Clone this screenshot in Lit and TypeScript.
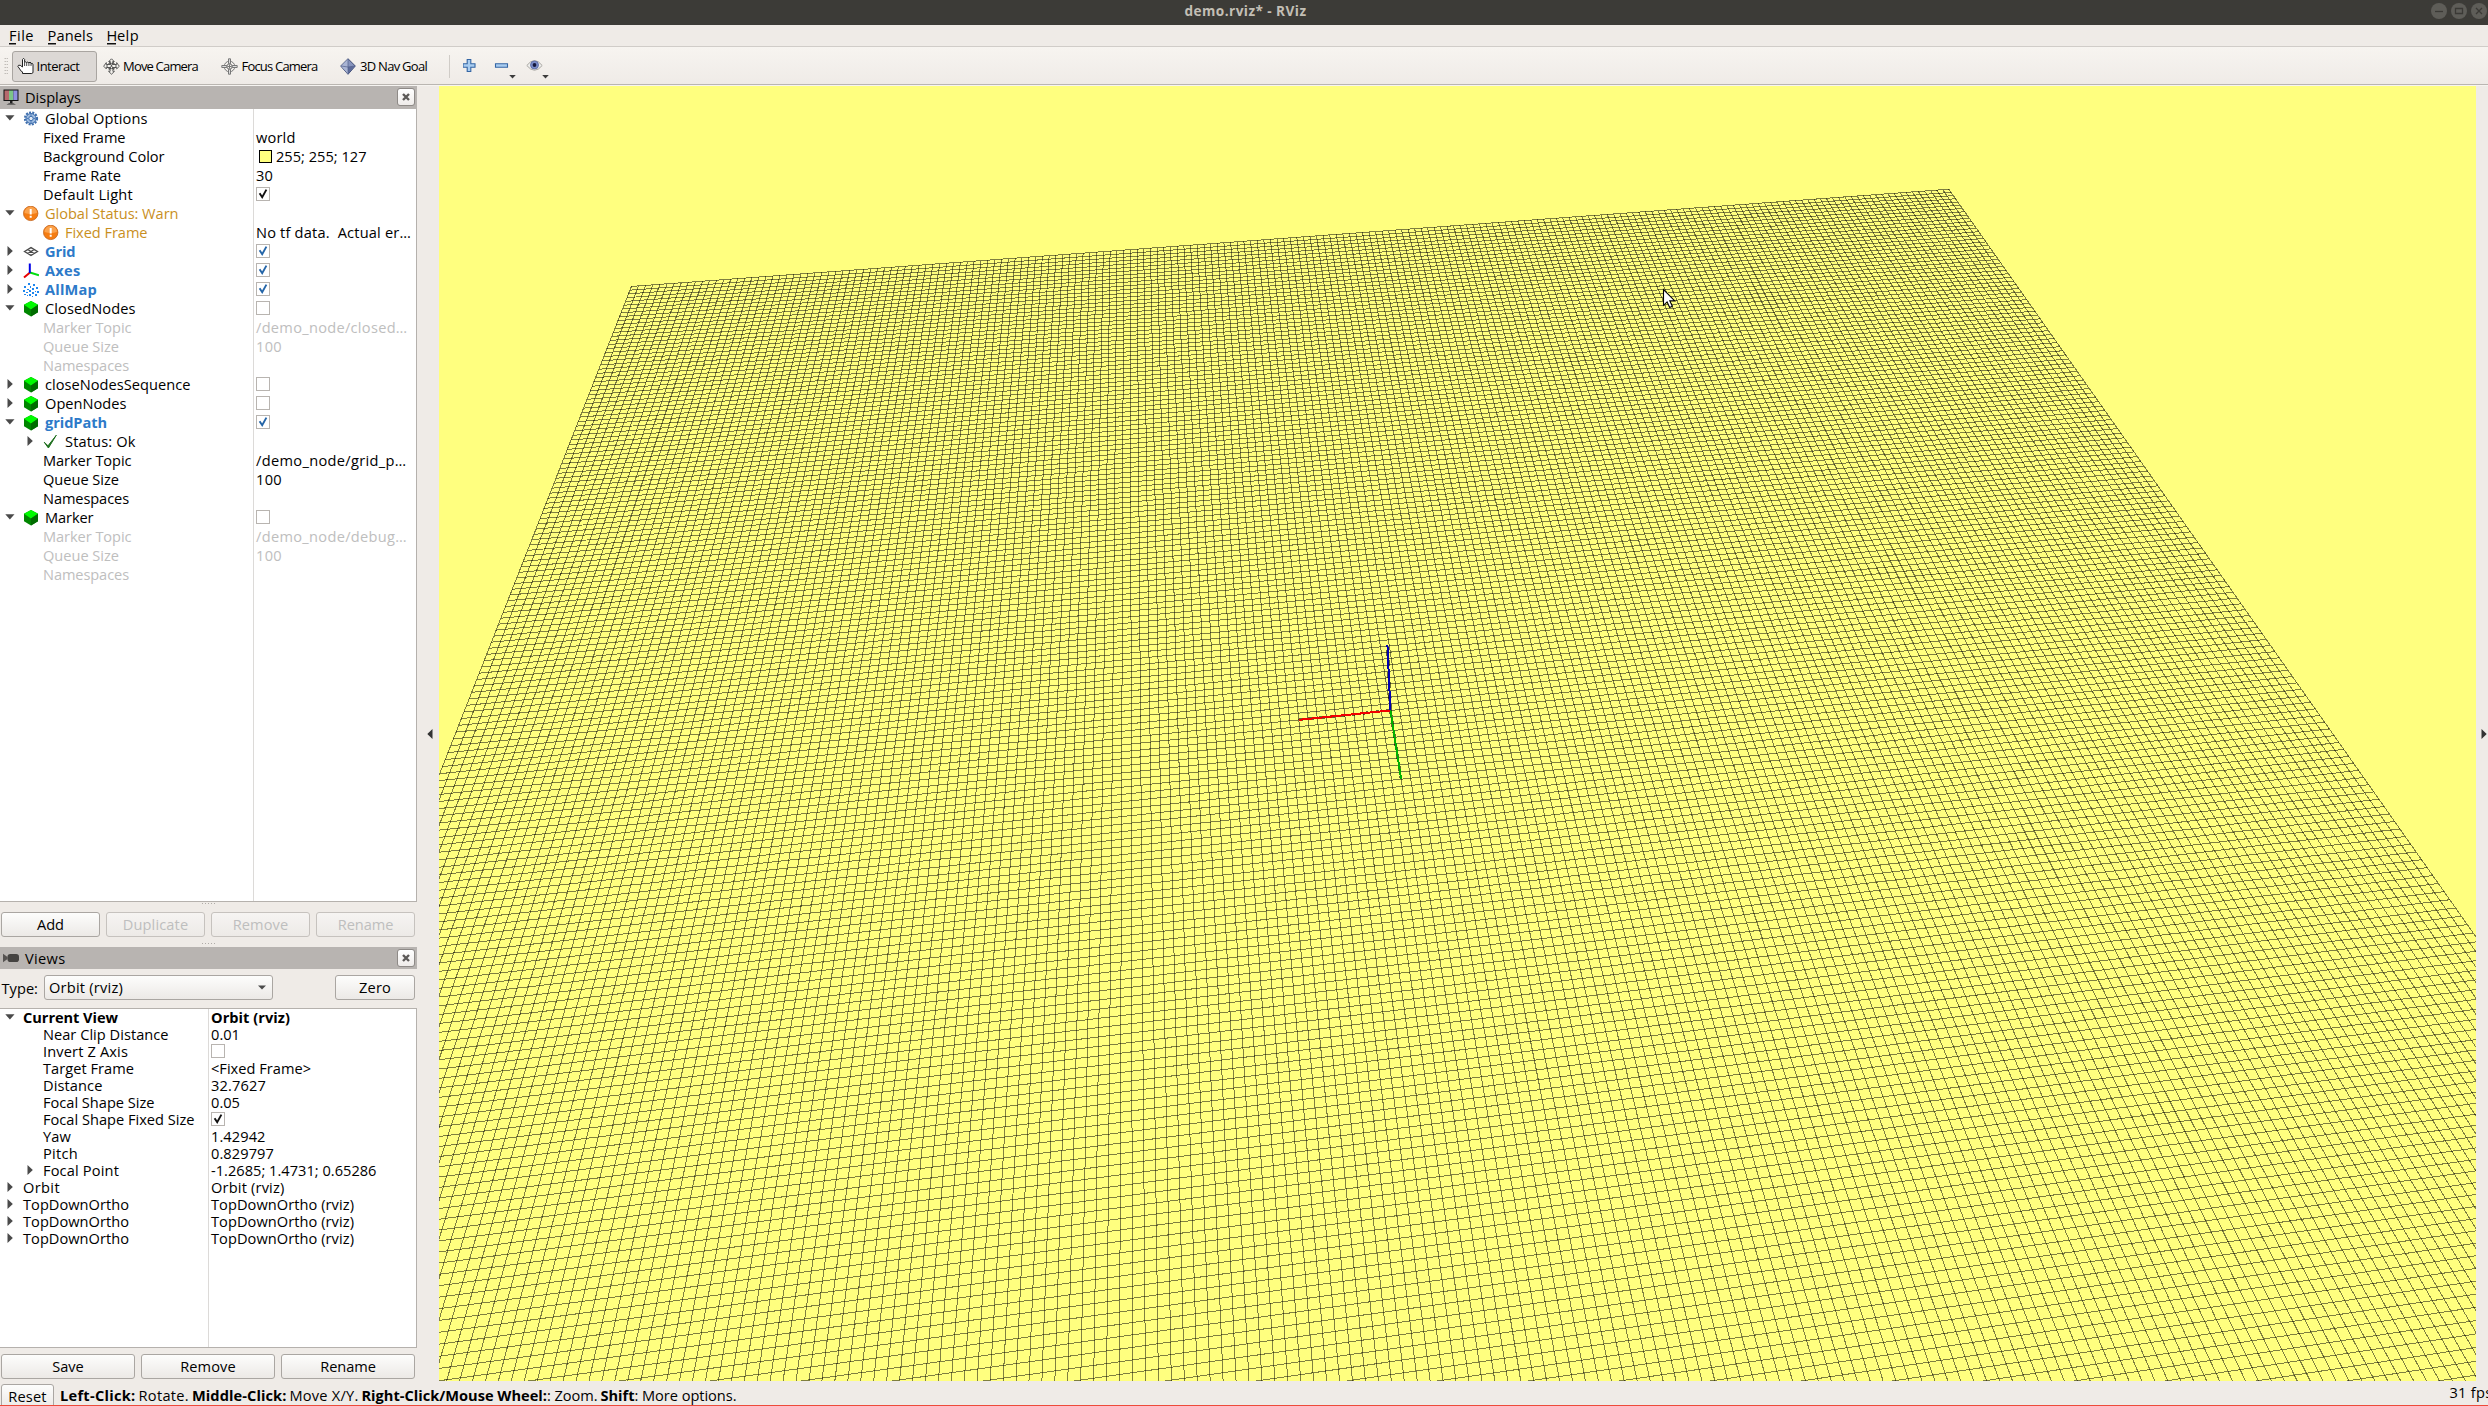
import { LitElement, html, css, svg, nothing } from "lit";
import { customElement, property, query } from "lit/decorators.js";

/* A single-line label whose tracking is adjusted so that it occupies a given width. */
@customElement("ui-text")
class UiText extends LitElement {
  @property() text = "";
  @property({ type: Number }) w = 0;
  @query("span") private span!: HTMLSpanElement;

  static styles = css`
    :host { display: inline-block; white-space: pre; flex: none; }
    span { display: inline-block; }
  `;

  updated() {
    if (!this.w) return;
    this.span.style.letterSpacing = "0px";
    const natural = this.span.getBoundingClientRect().width;
    this.span.style.letterSpacing = `${((this.w - natural) / this.text.length).toFixed(3)}px`;
  }

  render() {
    return html`<span>${this.text}</span>`;
  }
}

const t = (text: string, w: number, cls = "") => html`<ui-text class=${cls} .text=${text} .w=${w}></ui-text>`;

/* ---------- icons ---------- */
const icons: Record<string, unknown> = {
  gear: svg`<circle cx="8" cy="7.5" r="6" fill="none" stroke="#3f6fae" stroke-width="2.2" stroke-dasharray="2 1.2"/>
    <circle cx="8" cy="7.5" r="5" fill="#9dbbe0" stroke="#3f6fae" stroke-width="1"/>
    <circle cx="8" cy="7.5" r="2.2" fill="#dfe9f5" stroke="#3f6fae" stroke-width="1"/>
    <path d="M8 3v2.2M8 9.8V12M3.5 7.5h2.2M10.3 7.5h2.2" stroke="#4f7db8" stroke-width="1"/>`,
  warn: svg`<circle cx="7.7" cy="7.4" r="7.2" fill="#f57c11" stroke="#c2621a" stroke-width=".8"/>
    <path d="M1.5 7a6.2 6.2 0 0 1 12.4 0q-6 2.2-12.4 0z" fill="#fba24c"/>
    <path d="M6.7 3h2v5.4h-2zM6.7 9.7h2v2h-2z" fill="#fff"/>`,
  grid: svg`<path d="M1.5 7.5 8 3.6l6.5 3.9L8 11.4zM4.7 5.5l6.5 4M11.2 5.5l-6.5 4" fill="none" stroke="#4a4a4a" stroke-width="1.3"/>`,
  axes: svg`<path d="M7 9.5 1 14.5" stroke="#e80000" stroke-width="2"/><path d="M7 9.5l9 2.8" stroke="#00dd10" stroke-width="2"/>
    <path d="M6.8 10V.5" stroke="#0000e6" stroke-width="2"/>`,
  cloud: svg`<path d="M5 1h2v1.500H5zM10 2h1.500v2H10zM1 4h2v1.500H1zM7 4h1v2H7zM13 5h2v1.500h-2zM4 6.500h2V8H4zM9 6h1.500v2H9zM0 8h1.500v2H0zM6 8h1.500v2H6zM12 9h1v1h-1zM14 9h2v1.500h-2zM3 10h2v1H3zM9 10h1.500v2H9zM1 12h2v1H1zM6 12h1.500v2H6zM12 12h1.500v2H12zM4 13h1v1H4zM9 14h1v1H9z" fill="#1e86ee" shape-rendering="crispEdges"/>`,
  cube: svg`<path d="M8 0l7 3.8v7.4L8 15.5l-7-4.3V3.8z" fill="#008600"/><path d="M8 0l7 3.8L8 8.4 1 3.8z" fill="#00fb00"/><path d="M8 8.4l7-4.6v7.4L8 15.5z" fill="#006c00"/>`,
  ok: svg`<path d="M1.2 8.2 5 11.8 13.3 1.2 5.4 14z" fill="#1e7a1e" stroke="#1e6e1e" stroke-width="1"/>`,
};

const icon = (name: string) => html`<svg class="ico" width="16" height="16" viewBox="0 0 16 16">${icons[name]}</svg>`;

const arrow = (kind?: string) => html`<span class="arrow">
  ${kind === "open"
    ? html`<svg width="10" height="6" viewBox="0 0 10 6"><path d="M.3.3h9.2L4.9 5.6z" fill="#4a4a4a"/></svg>`
    : kind === "shut"
      ? html`<svg width="6" height="10" viewBox="0 0 6 10"><path d="M.5 0v10L5.8 5z" fill="#4a4a4a"/></svg>`
      : nothing}
</span>`;

const check = (on: boolean, color = "#111") => html`<span class="box">
  ${on ? html`<svg width="12" height="12" viewBox="0 0 12 12"><path d="M2.6 5.2 5.2 9.2 9.4 1.6" fill="none" stroke=${color} stroke-width="1.9"/></svg>` : nothing}
</span>`;

/* ---------- tree data ---------- */
interface Row {
  level: number;
  label: string;
  w: number;
  arrow?: string;
  icon?: string;
  tone?: string;
  value?: string;
  vw?: number;
  swatch?: boolean;
  check?: string;
}

const displayRows: Row[] = [
  { level: 0, label: "Global Options", w: 102.5, arrow: "open", icon: "gear" },
  { level: 1, label: "Fixed Frame", w: 82.5, value: "world", vw: 39.5 },
  { level: 1, label: "Background Color", w: 121.5, value: "255; 255; 127", vw: 90.5, swatch: true },
  { level: 1, label: "Frame Rate", w: 78, value: "30", vw: 17 },
  { level: 1, label: "Default Light", w: 90, check: "black" },
  { level: 0, label: "Global Status: Warn", w: 133.5, arrow: "open", icon: "warn", tone: "warn" },
  { level: 1, label: "Fixed Frame", w: 82.5, icon: "warn", tone: "warn", value: "No tf data.  Actual er…", vw: 155 },
  { level: 0, label: "Grid", w: 30.5, arrow: "shut", icon: "grid", tone: "on", check: "blue" },
  { level: 0, label: "Axes", w: 35.5, arrow: "shut", icon: "axes", tone: "on", check: "blue" },
  { level: 0, label: "AllMap", w: 52, arrow: "shut", icon: "cloud", tone: "on", check: "blue" },
  { level: 0, label: "ClosedNodes", w: 90.5, arrow: "open", icon: "cube", check: "off" },
  { level: 1, label: "Marker Topic", w: 88.5, tone: "dim", value: "/demo_node/closed…", vw: 151.5 },
  { level: 1, label: "Queue Size", w: 76, tone: "dim", value: "100", vw: 26 },
  { level: 1, label: "Namespaces", w: 86, tone: "dim" },
  { level: 0, label: "closeNodesSequence", w: 145.5, arrow: "shut", icon: "cube", check: "off" },
  { level: 0, label: "OpenNodes", w: 81.5, arrow: "shut", icon: "cube", check: "off" },
  { level: 0, label: "gridPath", w: 62, arrow: "open", icon: "cube", tone: "on", check: "blue" },
  { level: 1, label: "Status: Ok", w: 70.5, arrow: "shut", icon: "ok" },
  { level: 1, label: "Marker Topic", w: 88.5, value: "/demo_node/grid_p…", vw: 150.5 },
  { level: 1, label: "Queue Size", w: 76, value: "100", vw: 26 },
  { level: 1, label: "Namespaces", w: 86 },
  { level: 0, label: "Marker", w: 48.5, arrow: "open", icon: "cube", check: "off" },
  { level: 1, label: "Marker Topic", w: 88.5, tone: "dim", value: "/demo_node/debug…", vw: 151 },
  { level: 1, label: "Queue Size", w: 76, tone: "dim", value: "100", vw: 26 },
  { level: 1, label: "Namespaces", w: 86, tone: "dim" },
];

const ortho: Row = { level: 0, label: "TopDownOrtho", w: 106, arrow: "shut", value: "TopDownOrtho (rviz)", vw: 143 };
const viewRows: Row[] = [
  { level: 0, label: "Current View", w: 95, arrow: "open", tone: "bold", value: "Orbit (rviz)", vw: 79 },
  { level: 1, label: "Near Clip Distance", w: 125.5, value: "0.01", vw: 29 },
  { level: 1, label: "Invert Z Axis", w: 85, check: "off" },
  { level: 1, label: "Target Frame", w: 91, value: "<Fixed Frame>", vw: 100 },
  { level: 1, label: "Distance", w: 59.5, value: "32.7627", vw: 55 },
  { level: 1, label: "Focal Shape Size", w: 111.5, value: "0.05", vw: 29 },
  { level: 1, label: "Focal Shape Fixed Size", w: 151.5, check: "black" },
  { level: 1, label: "Yaw", w: 28, value: "1.42942", vw: 54.5 },
  { level: 1, label: "Pitch", w: 35, value: "0.829797", vw: 63 },
  { level: 1, label: "Focal Point", w: 76, arrow: "shut", value: "-1.2685; 1.4731; 0.65286", vw: 165.5 },
  { level: 0, label: "Orbit", w: 37, arrow: "shut", value: "Orbit (rviz)", vw: 73.5 },
  ortho,
  ortho,
  ortho,
];

const tree = (rows: Row[], cls: string) => html`<div class="tree ${cls}">
  <div class="names">
    ${rows.map((r) => html`<div class="row lvl${r.level} ${r.tone ?? ""}">
      ${arrow(r.arrow)}${r.icon ? icon(r.icon) : nothing}${t(r.label, r.w)}
    </div>`)}
  </div>
  <div class="vals">
    ${rows.map((r) => html`<div class="row ${r.tone === "dim" || r.tone === "bold" ? r.tone : ""}">
      ${r.check ? check(r.check !== "off", r.check === "blue" ? "#2465a8" : "#111") : nothing}
      ${r.swatch ? html`<span class="swatch"></span>` : nothing}
      ${r.value ? t(r.value, r.vw ?? 0) : nothing}
    </div>`)}
  </div>
</div>`;

/* ---------- 3D scene: orbit camera over a 200 x 200 grid of 0.2 m cells ---------- */
type V3 = [number, number, number];
const VW = 2037;
const VH = 1295;
const YAW = 1.42942;
const PITCH = 0.829797;
const DIST = 32.7627;
const FOCAL: V3 = [-1.2685, 1.4731, 0.65286];
const FLEN = VH / 2 / Math.tan(Math.PI / 8);
const cy = Math.cos(YAW), sy = Math.sin(YAW), cp = Math.cos(PITCH), sp = Math.sin(PITCH);
const FWD: V3 = [-cy * cp, -sy * cp, -sp];
const RIGHT: V3 = [-sy, cy, 0];
const UP: V3 = [-cy * sp, -sy * sp, cp];
const dot = (a: V3, b: V3) => a[0] * b[0] + a[1] * b[1] + a[2] * b[2];

function project(p: V3): [string, string] {
  const r: V3 = [p[0] - FOCAL[0], p[1] - FOCAL[1], p[2] - FOCAL[2]];
  const depth = DIST + dot(FWD, r);
  return [(VW / 2 + (FLEN * dot(RIGHT, r)) / depth).toFixed(2), (VH / 2 - (FLEN * dot(UP, r)) / depth).toFixed(2)];
}

function line(a: V3, b: V3, cls: string) {
  const [x1, y1] = project(a);
  const [x2, y2] = project(b);
  return svg`<line class=${cls} x1=${x1} y1=${y1} x2=${x2} y2=${y2}/>`;
}

@customElement("rviz-scene")
class RvizScene extends LitElement {
  static styles = css`
    :host { display: block; width: 2037px; height: 1295px; background: #ffff7f; }
    svg { display: block; overflow: hidden; }
    .g { stroke: #000; stroke-opacity: 0.5; stroke-width: 1; shape-rendering: crispEdges; }
    .x, .y, .z { stroke-width: 2; shape-rendering: crispEdges; }
    .x { stroke: #f00000; }
    .y { stroke: #00b000; }
    .z { stroke: #0000b0; }
    .edge { stroke: #000; stroke-opacity: 0.6; stroke-width: 2.8; stroke-dasharray: 6 5; shape-rendering: crispEdges; }
  `;

  render() {
    const lines = [];
    for (let i = 0; i <= 200; i++) {
      const c = -20 + i * 0.2;
      lines.push(line([c, -20, 0], [c, 20, 0], "g"), line([-20, c, 0], [20, c, 0], "g"));
    }
    const axes: [V3, string][] = [[[0, 2, 0], "y"], [[2, 0, 0], "x"], [[0, 0, 2], "z"]];
    return html`<svg width=${VW} height=${VH} viewBox="0 0 ${VW} ${VH}">
      ${lines}
      ${axes.map(([end]) => line([0, 0, 0], end, "edge"))}
      ${axes.map(([end, cls]) => line([0, 0, 0], end, cls))}
      <path transform="translate(1224 203)" d="M.5.5v15.8l3.6-3.4 2.6 5.6 2.6-1.2-2.5-5.4h5z" fill="#fff" stroke="#000" stroke-width="1.1"/>
    </svg>`;
  }
}

@customElement("app-root")
class AppRoot extends LitElement {
  static styles = css`
    :host { display: block; width: 2488px; height: 1406px; overflow: hidden; font: 14.6px "Open Sans", "Noto Sans", sans-serif; color: #000; background: #efebe7; }
    * { box-sizing: border-box; }
    .app { display: flex; flex-direction: column; height: 1406px; width: 2488px; overflow: hidden; }
    .title { height: 25px; background: #3c3b37; color: #c3bfb5; display: grid; grid-template-columns: 1fr auto 1fr; font-weight: 700; font-size: 13.6px; line-height: 22px; flex: none; }
    .title ui-text { grid-column: 2; margin-left: 3px; }
    .wins { display: flex; justify-content: flex-end; gap: 4px; padding: 3px 1px 0 0; }
    .menu { height: 22px; flex: none; display: flex; border-bottom: 1px solid #d0ccc8; padding-left: 9px; gap: 13.5px; line-height: 21px; }
    .menu span { display: flex; }
    .menu .u { height: 20px; background: linear-gradient(#111, #111) 0 17.5px / calc(100% - 1px) 1.5px no-repeat; }
    .tools { height: 39px; flex: none; background: linear-gradient(#f7f4f0, #efebe7); border-bottom: 1px solid #f6f4f1; box-shadow: inset 0 -1px 0 #bab6b1; display: flex; align-items: center; font-size: 13px; padding-left: 4px; }
    .grip { width: 4px; height: 18px; margin-right: 4px; background: radial-gradient(circle, #b5b1ac 0.7px, transparent 0.9px) 0 0 / 2.5px 3px; }
    .tool { display: flex; align-items: center; height: 31px; border: 1px solid transparent; border-radius: 3px; padding-left: 4px; gap: 3px; flex: none; }
    .tool.active { background: #dcd8d5; border-color: #a9a5a1; }
    .interact { width: 85px; padding-left: 3.5px; }
    .move { width: 119px; padding-left: 5px; }
    .focus { width: 119px; gap: 3.5px; }
    .nav { width: 114px; padding-left: 4px; gap: 4px; }
    .sep { width: 1px; height: 23px; background: #d0ccc7; margin-right: 13px; }
    .body { display: flex; height: 1295px; flex: none; }
    .side { width: 417px; display: flex; flex-direction: column; flex: none; }
    .head { background: #b8b4b1; height: 23px; flex: none; display: flex; align-items: center; padding: 0 2px 0 3px; font-size: 14.6px; line-height: 21px; padding-bottom: 1px; }
    .head .hi { margin-right: 6px; flex: none; }
    .head .x { margin-left: auto; width: 18px; height: 18px; border: 1px solid #8e8a87; border-radius: 3px; background: linear-gradient(#fff, #efecea); display: flex; align-items: center; justify-content: center; }
    .head.v { height: 22px; padding-bottom: 0; }
    .tree { display: flex; background: #fff; border-right: 1px solid #b5b1ad; border-bottom: 1px solid #b5b1ad; flex: none; }
    .tree.a { height: 793px; }
    .tree.b { height: 340px; border-top: 1px solid #b5b1ad; margin-top: 8px; }
    .names { border-right: 1px solid #dcdad8; flex: none; overflow: hidden; }
    .a .names { width: 254px; }
    .b .names { width: 209px; }
    .vals { flex: 1; padding-left: 2px; overflow: hidden; }
    .row { display: flex; align-items: center; height: 19px; line-height: 19px; }
    .row ui-text { margin-bottom: 1px; }
    .b .row { height: 17px; line-height: 17px; }
    .lvl1 { padding-left: 20px; }
    .arrow { width: 19px; margin-right: 4px; display: flex; justify-content: center; flex: none; margin-bottom: 1px; }
    .ico { margin-right: 6px; flex: none; }
    .warn { color: #c98f1e; }
    .on { color: #2d7ac9; font-weight: 700; }
    .dim { color: #bebebe; }
    .bold { font-weight: 700; }
    .box { width: 14px; height: 14px; border: 1px solid #b8b4b0; background: #fff; flex: none; display: flex; margin-bottom: 1px; }
    .swatch { width: 13px; height: 13px; border: 1px solid #000; background: #ffff7f; margin: 0 4px 0 3px; }
    .dots { height: 3px; width: 16px; margin-left: 201px; background: radial-gradient(circle, #b0aca8 0.7px, transparent 0.9px) 0 0 / 3px 3px; flex: none; }
    .dots.low { margin-top: 5px; margin-bottom: 2px; }
    .btns { display: flex; gap: 6px; padding: 0 2px 0 1px; height: 25px; flex: none; margin-top: 6px; }
    .btns.first { margin-top: 7px; }
    .btn { flex: 1; height: 25px; border: 1px solid #aaa6a2; border-radius: 3px; background: linear-gradient(#fdfdfc, #ece9e6); display: flex; align-items: center; justify-content: center; line-height: 23px; }
    .btn.off { color: #bebebe; border-color: #c6c2be; background: linear-gradient(#f6f4f2, #edeae7); }
    .type { display: flex; align-items: center; height: 25px; margin-top: 6px; padding: 0 2px 0 1.5px; flex: none; }
    .combo { margin-left: 6px; width: 229px; flex: none; justify-content: space-between; padding: 0 6px 0 4px; }
    .zero { flex: none; width: 80px; margin-left: auto; }
    .split { width: 22px; flex: none; display: flex; align-items: center; justify-content: center; padding: 0 0 0 3px; }
    .split.r { width: 12px; padding: 0 0 0 3px; }
    .foot { flex: none; height: 25px; display: flex; border-bottom: 1px solid #ee4a3a; padding-left: 1px; overflow: hidden; line-height: 28px; }
    .reset { flex: none; width: 53px; margin-top: 3px; }
    .foot .msg { display: flex; margin-left: 6px; flex: none; gap: 3px; }
    .foot .pair { display: flex; }
    .foot b { display: flex; }
    .fps { margin-left: 1713px; line-height: 22px; }
  `;

  private menu(first: string, rest: string, w1: number, w2: number) {
    return html`<span>${t(first, w1, "u")}${t(rest, w2)}</span>`;
  }

  private close() {
    return html`<span class="x"><svg width="8" height="8" viewBox="0 0 8 8"><path d="M1 1l6 6M7 1 1 7" stroke="#5c5957" stroke-width="2.4"/></svg></span>`;
  }

  private toolbar() {
    return html`<div class="tools">
      <span class="grip"></span>
      <div class="tool active interact">
        <svg width="17" height="18" viewBox="0 0 17 18"><path d="M5.5 16.5h9.3q1.2-.2 1.2-1.4V7.2q-.9-1.6-2-.2V5.9q-.9-1.4-2.1 0-.9-1.6-2.3-.4-.5-.9-2-.6V2.4Q6.700 .4 5.500 2.400V10L3.200 8.300Q1 7.700.9 9.400L3.400 13q.5 1.500 2.100 1.900z" fill="#fff" stroke="#222" stroke-width="1"/><path d="M7.600 5v4M9.700 5.500v3.500M11.900 6v3M14 7v2" stroke="#333" stroke-width=".9"/></svg>
        ${t("Interact", 43)}
      </div>
      <div class="tool move">
        <svg width="17" height="17" viewBox="0 0 17 17" fill="#f3f1ed" stroke="#4c4c4c" stroke-width=".9"><path d="M8.500.8 11.200 3.500H9.700v3h4V4.600l2.600 3.700-2.600 2.600V9.500H9.900v3.800h1.600l-3 2.900-3-2.900h1.600V9.500H3.300v1.400L.7 8.200 3.300 4.600v1.900h4v-3H5.800z"/><ellipse cx="8.500" cy="8" rx="4.600" ry="2.600" fill="none"/><path d="M6 3.500l5 8.500M11 3.500 6 12" /></svg>
        ${t("Move Camera", 75)}
      </div>
      <div class="tool focus">
        <svg width="17" height="17" viewBox="0 0 17 17" fill="none" stroke="#777" stroke-width="1"><circle cx="8.500" cy="8.500" r="5.300"/><circle cx="8.500" cy="8.500" r="2.700"/><path d="M7.500.8h2v5h-2zM7.500 11.200h2v5h-2zM.8 7.500h5v2h-5zM11.200 7.500h5v2h-5z" fill="#ddd"/><path d="M6.500 8.500h4M8.500 6.500v4"/></svg>
        ${t("Focus Camera", 76)}
      </div>
      <div class="tool nav">
        <svg width="16" height="17" viewBox="0 0 16 17"><path d="M8 .7 15.300 8 8 16.300.7 8z" fill="#8794bd" stroke="#3d4a73" stroke-width="1"/><path d="M8 1v15L1 8z" fill="#aab5d4"/><path d="M8 9 15 8 8 16z" fill="#5d6b99"/><path d="M1 8l7 1 7-1M8 1v15" stroke="#55628e" stroke-width=".7" fill="none"/></svg>
        ${t("3D Nav Goal", 67)}
      </div>
      <span class="sep"></span>
      <svg width="100" height="26" viewBox="0 0 100 26">
        <path d="M3.700 6.500h3.600v4.200h4.200v3.600H7.300v4.200H3.700v-4.200H-.5v-3.600h4.200z" transform="translate(.5 0)" fill="#a9cdf0" stroke="#3465a4" stroke-width="1.100"/>
        <path d="M32.500 10.800h12v3.400h-12z" fill="#a9cdf0" stroke="#3465a4" stroke-width="1.100"/>
        <path d="M46.200 22h6.600l-3.300 3.600zM79.200 22h6.600l-3.300 3.600z" fill="#3c3c3c"/>
        <path d="M63.800 12.500Q71.500 2.500 79.200 12.500 71.500 22 63.800 12.500z" fill="#eeeeec" stroke="#aaa7a2" stroke-width="1"/>
        <circle cx="71.500" cy="12" r="4" fill="#7a8cc8" stroke="#56669f" stroke-width=".8"/><circle cx="71.500" cy="12" r="1.900" fill="#15183c"/>
      </svg>
    </div>`;
  }

  render() {
    return html`<div class="app">
      <div class="title">
        ${t("demo.rviz* - RViz", 122)}
        <div class="wins">
          ${["M4 8.500h8", "M4.500 5.500h7v5h-7z", "M5 5l6 6M11 5l-6 6"].map((d) => html`<svg width="16" height="16" viewBox="0 0 16 16"><circle cx="8" cy="8" r="8" fill="#5e5d58"/><path d=${d} fill="none" stroke="#3a3935" stroke-width="1.300"/></svg>`)}
        </div>
      </div>
      <div class="menu">${this.menu("F", "ile", 8, 17)}${this.menu("P", "anels", 9, 36.5)}${this.menu("H", "elp", 10.500, 22)}</div>
      ${this.toolbar()}
      <div class="body">
        <div class="side">
          <div class="head">
            <svg class="hi" width="16" height="17" viewBox="0 0 16 17"><path d="M.5.5h15v11.500H.5z" fill="#111"/><path d="M1.500 1.500h4.500V11H1.500z" fill="#b76a6e"/><path d="M6 1.500h4.300V11H6z" fill="#7cc487"/><path d="M10.300 1.500h4.200V11h-4.200z" fill="#8f90e0"/><path d="M7 12h2.500v2H7z" fill="#222"/><path d="M3.500 15.600q4.600-2.800 9.500 0z" fill="#222"/></svg>
            ${t("Displays", 56)}${this.close()}
          </div>
          ${tree(displayRows, "a")}
          <div class="dots"></div>
          <div class="btns first">
            <div class="btn">${t("Add", 27)}</div>
            <div class="btn off">${t("Duplicate", 65.5)}</div>
            <div class="btn off">${t("Remove", 55.5)}</div>
            <div class="btn off">${t("Rename", 55.5)}</div>
          </div>
          <div class="dots low"></div>
          <div class="head v">
            <svg class="hi" width="16" height="10" viewBox="0 0 16 10"><path d="M0 .8 4.500 4v2L0 9.200z" fill="#555250"/><rect x="4.500" y="1" width="11.500" height="8" rx="2.800" fill="#454341"/></svg>
            ${t("Views", 40.500)}${this.close()}
          </div>
          <div class="type">
            ${t("Type:", 36.500)}
            <div class="btn combo">${t("Orbit (rviz)", 74)}<svg width="8" height="5" viewBox="0 0 8 5"><path d="M0 .4h8L4 4.600z" fill="#4a4a4a"/></svg></div>
            <div class="btn zero">${t("Zero", 32)}</div>
          </div>
          ${tree(viewRows, "b")}
          <div class="btns">
            <div class="btn">${t("Save", 31.500)}</div>
            <div class="btn">${t("Remove", 55.5)}</div>
            <div class="btn">${t("Rename", 55.5)}</div>
          </div>
        </div>
        <div class="split"><svg width="6" height="10" viewBox="0 0 6 10"><path d="M5.500 0v10L.3 5z" fill="#333"/></svg></div>
        <rviz-scene></rviz-scene>
        <div class="split r"><svg width="6" height="10" viewBox="0 0 6 10"><path d="M.5 0v10L5.700 5z" fill="#333"/></svg></div>
      </div>
      <div class="foot">
        <div class="btn reset">${t("Reset", 38.500)}</div>
        <div class="msg">
          <b>${t("Left-Click:", 75.5)}</b>${t("Rotate.", 50.500)}
          <b>${t("Middle-Click:", 94.5)}</b>${t("Move X/Y.", 69)}
          <span class="pair"><b>${t("Right-Click/Mouse Wheel:", 185.500)}</b>${t(": Zoom.", 50.500)}</span>
          <span class="pair"><b>${t("Shift", 34)}</b>${t(": More options.", 102)}</span>
        </div>
        ${t("31 fps", 43, "fps")}
      </div>
    </div>`;
  }
}
